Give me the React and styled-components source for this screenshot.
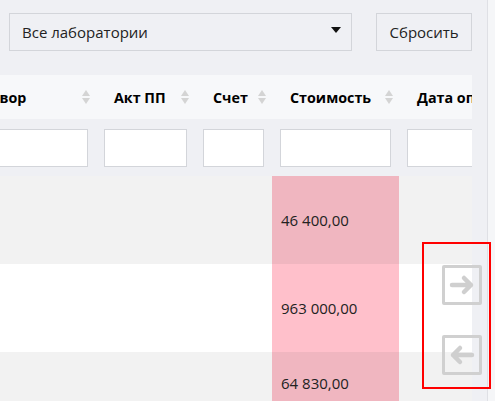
import React from 'react'
import styled, { createGlobalStyle } from 'styled-components'

const GlobalStyle = createGlobalStyle`
    body {
        margin: 0;
        background: #eff0f4;
        font-family: 'Open Sans', 'Noto Sans', sans-serif;
        color: #222;
    }
`

const columns = [
    { title: 'Договор', width: 150 },
    { title: 'Акт ПП', width: 99 },
    { title: 'Счет', width: 77 },
    { title: 'Стоимость', width: 127 },
    { title: 'Дата оплаты', width: 150 },
]

const rows = ['46 400,00', '963 000,00', '64 830,00']

const template = columns.map(c => c.width + 'px').join(' ')

export default function App() {
    return (
        <Page>
            <GlobalStyle />
            <Main>
                <Toolbar>
                    <Select>
                        <span>Все лаборатории</span>
                        <Caret />
                    </Select>
                    <ResetButton>Сбросить</ResetButton>
                </Toolbar>

                <TableWrap>
                    <Grid>
                        {columns.map(c => (
                            <HeadCell key={c.title}>
                                <span>{c.title}</span>
                                <SortIcon>
                                    <Tri up />
                                    <Tri />
                                </SortIcon>
                            </HeadCell>
                        ))}
                        {columns.map(c => (
                            <FilterCell key={'f' + c.title}>
                                <FilterInput />
                            </FilterCell>
                        ))}
                        {rows.map((value, i) =>
                            columns.map((c, j) => (
                                <BodyCell key={i + '-' + j} odd={i % 2 === 0} price={j === 3}>
                                    {j === 3 ? value : ''}
                                </BodyCell>
                            ))
                        )}
                    </Grid>
                </TableWrap>
            </Main>
            <ScrollTrack />

            <Highlight />
            <ArrowButton top={265}>
                <svg width="34" height="34" viewBox="0 0 34 34">
                    <path d="M7 17 H26 M19 10 L26 17 L19 24" stroke="#cfcfcf" strokeWidth="4.5" fill="none" strokeLinecap="round" strokeLinejoin="round" />
                </svg>
            </ArrowButton>
            <ArrowButton top={335}>
                <svg width="34" height="34" viewBox="0 0 34 34">
                    <path d="M27 17 H8 M15 10 L8 17 L15 24" stroke="#cfcfcf" strokeWidth="4.5" fill="none" strokeLinecap="round" strokeLinejoin="round" />
                </svg>
            </ArrowButton>
        </Page>
    )
}

const Page = styled.div`
    position: relative;
    display: flex;
    width: 495px;
    height: 401px;
    overflow: hidden;
`

const Main = styled.div`
    width: 487px;
    flex-shrink: 0;
    overflow: hidden;
`

const ScrollTrack = styled.div`
    flex: 1;
    background: #f5f6f8;
    border-left: 1px solid #dfe0e5;
`

const Toolbar = styled.div`
    display: flex;
    align-items: center;
    gap: 24px;
    padding: 13px 15px 0 9px;
    height: 38px;
    margin-bottom: 24px;
`

const Select = styled.div`
    box-sizing: border-box;
    width: 344px;
    height: 38px;
    display: flex;
    align-items: center;
    justify-content: space-between;
    padding: 0 10px 0 12px;
    border: 1px solid #d3d5da;
    font-size: 15px;
    color: #222;
`

const Caret = styled.span`
    width: 0;
    height: 0;
    border-left: 5px solid transparent;
    border-right: 5px solid transparent;
    border-top: 6px solid #111;
    margin-top: -4px;
`

const ResetButton = styled.div`
    box-sizing: border-box;
    width: 96px;
    height: 38px;
    display: flex;
    align-items: center;
    justify-content: center;
    border: 1px solid #d3d5da;
    font-size: 15px;
    color: #222;
`

const TableWrap = styled.div`
    width: 472px;
    overflow: hidden;
`

const Grid = styled.div`
    display: grid;
    grid-template-columns: ${template};
    grid-template-rows: 44px 57px 88px 88px 62px;
    margin-left: -54px;
    width: max-content;
`

const HeadCell = styled.div`
    display: flex;
    align-items: center;
    justify-content: space-between;
    padding: 0 6px 0 18px;
    background: #f7f8fa;
    font-weight: 700;
    font-size: 14.3px;
    color: #000;
    white-space: nowrap;
`

const SortIcon = styled.span`
    display: flex;
    flex-direction: column;
    gap: 2px;
    width: 8px;
    align-items: center;
`

const Tri = styled.span`
    width: 0;
    height: 0;
    border-left: 4px solid transparent;
    border-right: 4px solid transparent;
    ${p => p.up ? 'border-bottom: 6px solid #d4d4d4;' : 'border-top: 6px solid #d4d4d4;'}
`

const FilterCell = styled.div`
    padding: 10px 8px 0 8px;
`

const FilterInput = styled.div`
    box-sizing: border-box;
    height: 38px;
    background: #fff;
    border: 1px solid #d3d5da;
`

const BodyCell = styled.div`
    display: flex;
    align-items: center;
    padding: 0 9px;
    font-size: 15px;
    color: #222;
    white-space: nowrap;
    background: ${p => p.price ? (p.odd ? '#f0b6c0' : '#ffc0cb') : (p.odd ? '#f2f2f2' : '#ffffff')};
`

const Highlight = styled.div`
    position: absolute;
    left: 422px;
    top: 242px;
    width: 69px;
    height: 147px;
    box-sizing: border-box;
    border: 2px solid #ff0000;
    pointer-events: none;
`

const ArrowButton = styled.div`
    position: absolute;
    left: 442px;
    top: ${p => p.top}px;
    width: 40px;
    height: 40px;
    box-sizing: border-box;
    border: 3px solid #d0d0d0;
    border-radius: 2px;
    display: flex;
    align-items: center;
    justify-content: center;
`
